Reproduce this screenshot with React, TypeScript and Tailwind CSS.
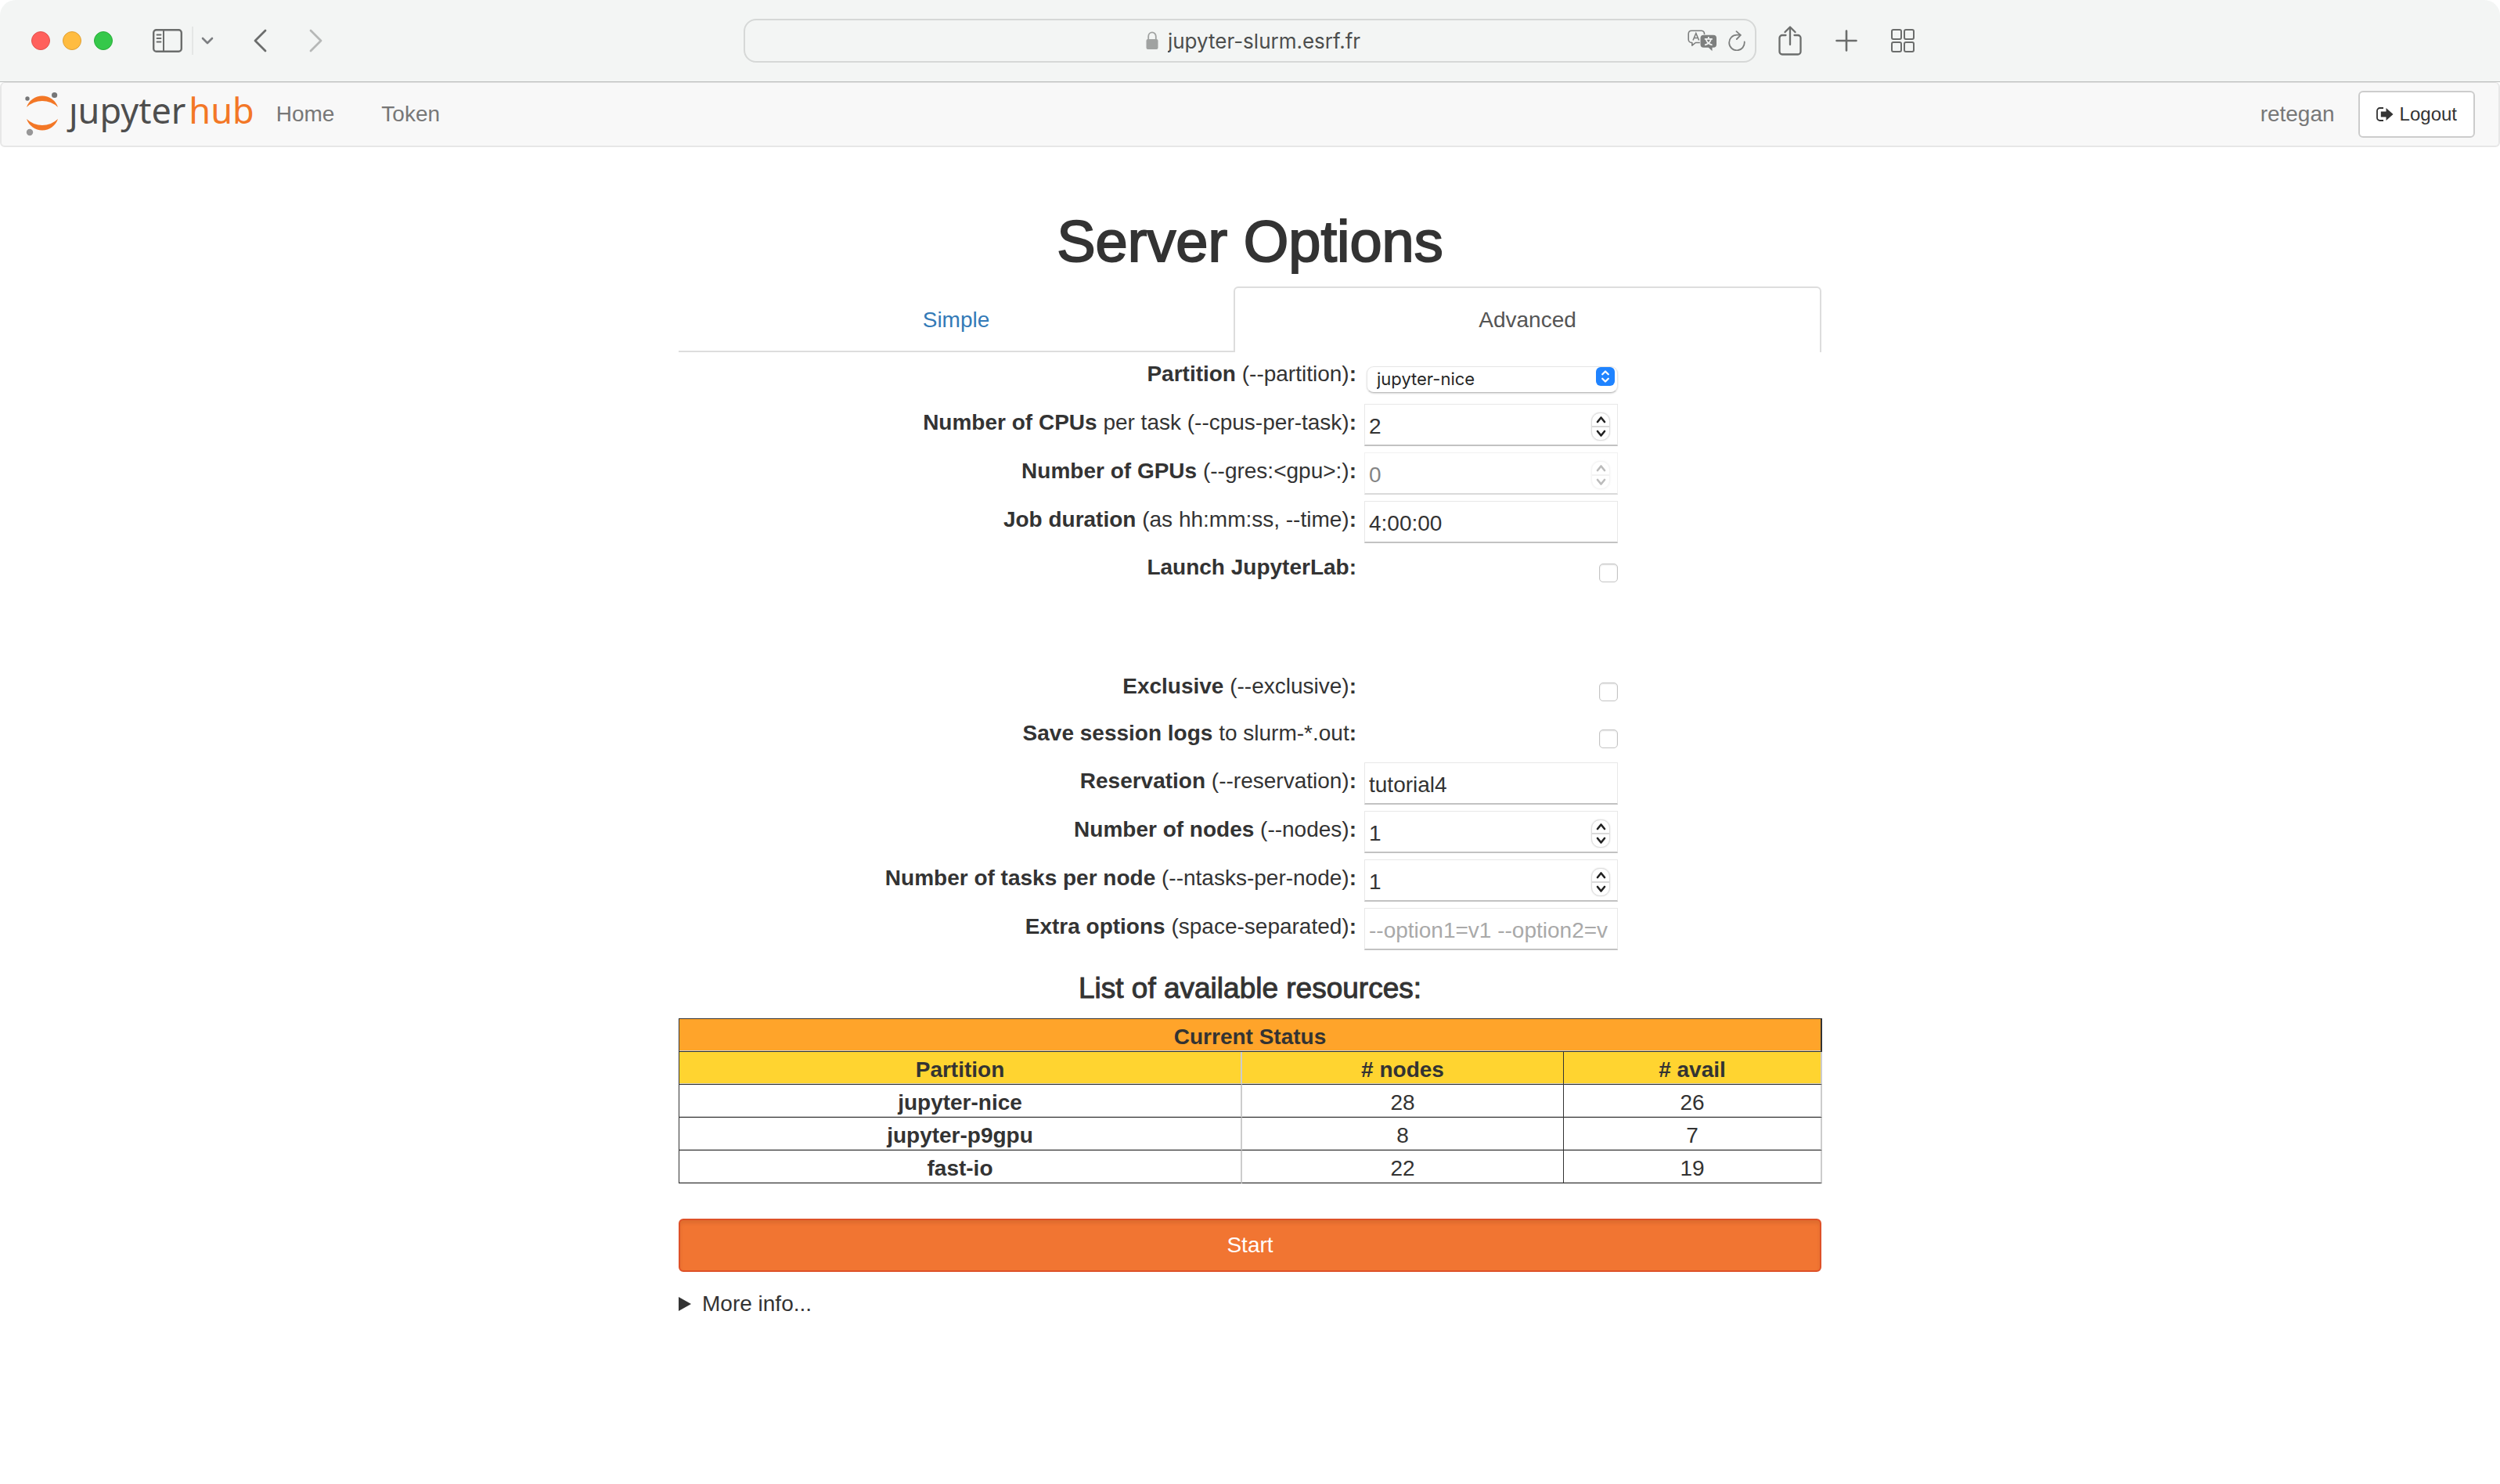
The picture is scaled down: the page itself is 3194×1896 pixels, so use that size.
import React, { useState } from "react";

const BODY = "font-['Liberation_Sans',Arial,sans-serif]";

function LogoMark() {
  return (
    <svg width="44" height="58" viewBox="0 0 44 58" aria-hidden="true">
      <circle cx="3" cy="9" r="2.7" fill="#767677" />
      <circle cx="37.6" cy="4.5" r="3.6" fill="#767677" />
      <circle cx="6" cy="52" r="4.2" fill="#989798" />
      <path d="M2 20A21.1 21.1 0 0 1 42 20A29 29 0 0 0 2 20Z" fill="#f37726" />
      <path d="M2 35A21.1 21.1 0 0 0 42 35A29 29 0 0 1 2 35Z" fill="#f37726" />
    </svg>
  );
}

function SidebarIcon() {
  return (
    <svg width="38" height="30" viewBox="0 0 38 30" fill="none" stroke="#6b6d6c" strokeWidth="2.4">
      <rect x="1.2" y="1.2" width="35.6" height="27.6" rx="3.5" />
      <path d="M14 1v28" strokeWidth="2" />
      <path d="M5.5 7.5h5M5.5 12h5M5.5 16.5h5" strokeWidth="1.8" strokeLinecap="round" />
    </svg>
  );
}

function ChevronIcon({ d, w, h, color, stroke }: { d: string; w: number; h: number; color: string; stroke: number }) {
  return (
    <svg width={w} height={h} viewBox={`0 0 ${w} ${h}`} fill="none" stroke={color} strokeWidth={stroke} strokeLinecap="round" strokeLinejoin="round">
      <path d={d} />
    </svg>
  );
}

function LockIcon() {
  return (
    <svg width="16" height="24" viewBox="0 0 16 24" aria-hidden="true">
      <path d="M3.2 11V6.5a4.8 5.2 0 0 1 9.6 0V11" fill="none" stroke="#a0a2a1" strokeWidth="1.8" />
      <rect x="0.5" y="10" width="15" height="13" rx="2" fill="#a0a2a1" />
    </svg>
  );
}

function TranslateIcon() {
  return (
    <svg width="38" height="28" viewBox="0 0 38 28" fill="none">
      <path d="M21.5 6V5A4 4 0 0 0 18 1.2H5A4 4 0 0 0 1.2 5v7.5A4 4 0 0 0 5 16.5h.8v3.7l4.5-3.7h5.5" stroke="#7d7f7e" strokeWidth="1.6" strokeLinejoin="round" />
      <path d="M7 13.5 10.8 4.5 14.6 13.5M8.3 10.5h5" stroke="#7d7f7e" strokeWidth="1.6" />
      <path d="M20.5 6.8h12.5a4 4 0 0 1 4 4v8a4 4 0 0 1-4 4h-1.5v4.5L26.8 22.8h-6.3a4 4 0 0 1-4-4v-8a4 4 0 0 1 4-4Z" fill="#7d7f7e" />
      <path d="M26.8 9v2.5M21.8 11.8h10M30 12c-.8 3.5-4 6.5-8 7.5M23.6 12c.8 3.5 4 6.5 8 7.5" stroke="#f3f5f4" strokeWidth="1.7" />
    </svg>
  );
}

function ReloadIcon() {
  return (
    <svg width="22" height="26" viewBox="0 0 22 26" fill="none" stroke="#7d7f7e" strokeWidth="1.8" strokeLinecap="round" strokeLinejoin="round">
      <path d="M20.7 14.5A9.8 9.8 0 1 1 11 5.7h4.5" />
      <path d="M10.5 1.2 15.8 5.9 10.8 11" />
    </svg>
  );
}

function ShareIcon() {
  return (
    <svg width="30" height="38" viewBox="0 0 30 38" fill="none" stroke="#6b6d6c" strokeWidth="2.3" strokeLinecap="round" strokeLinejoin="round">
      <path d="M9.5 12H5a3.5 3.5 0 0 0-3.5 3.5v17.5A3.5 3.5 0 0 0 5 36.5h20a3.5 3.5 0 0 0 3.5-3.5V15.5A3.5 3.5 0 0 0 25 12h-4.5" />
      <path d="M15 24V2M8.5 8 15 1.5 21.5 8" />
    </svg>
  );
}

function PlusIcon() {
  return (
    <svg width="28" height="28" viewBox="0 0 28 28" stroke="#6b6d6c" strokeWidth="2.6" strokeLinecap="round">
      <path d="M14 1.5v25M1.5 14h25" />
    </svg>
  );
}

function GridIcon() {
  return (
    <svg width="30" height="30" viewBox="0 0 30 30" fill="none" stroke="#6b6d6c" strokeWidth="2">
      <rect x="1" y="1" width="12" height="12" rx="2" />
      <rect x="17" y="1" width="12" height="12" rx="2" />
      <rect x="1" y="17" width="12" height="12" rx="2" />
      <rect x="17" y="17" width="12" height="12" rx="2" />
    </svg>
  );
}

function LogoutIcon() {
  return (
    <svg width="22" height="18" viewBox="0 0 22 18" aria-hidden="true">
      <path d="M9 1H4.5A3.5 3.5 0 0 0 1 4.5v9A3.5 3.5 0 0 0 4.5 17H9" fill="none" stroke="#333" strokeWidth="1.8" />
      <path d="M5.8 5.5h6.7V1L21.5 9l-9 8v-4.5H5.8Z" fill="#333" />
    </svg>
  );
}

function Toolbar() {
  return (
    <header className="grid h-[105px] grid-cols-[1fr_minmax(0,1294px)_1fr] items-center rounded-t-[20px] border-b border-[#b9bbba] bg-[#f3f5f4]">
      <div className="flex items-center pl-10">
        <div className="flex gap-4">
          <button aria-label="Close" className="size-6 rounded-full border border-[#e2514d] bg-[#ff605c]" />
          <button aria-label="Minimize" className="size-6 rounded-full border border-[#e0a034] bg-[#ffbc40]" />
          <button aria-label="Zoom" className="size-6 rounded-full border border-[#28ad38] bg-[#35c84a]" />
        </div>
        <button aria-label="Sidebar" className="ml-[51px]"><SidebarIcon /></button>
        <span className="ml-3 h-9 w-0.5 bg-[#e4e6e5]" />
        <button aria-label="Tab groups" className="ml-[10px]">
          <ChevronIcon d="M2 2 8 8 14 2" w={16} h={10} color="#7d7f82" stroke={2.6} />
        </button>
        <button aria-label="Back" className="ml-[50px]">
          <ChevronIcon d="M16 2 3 15 16 28" w={18} h={30} color="#6b6d6c" stroke={2.8} />
        </button>
        <button aria-label="Forward" className="ml-[54px]">
          <ChevronIcon d="M2 2 15 15 2 28" w={18} h={30} color="#b6b8b7" stroke={2.8} />
        </button>
      </div>
      <div className="flex h-14 items-center rounded-2xl border-2 border-[#d6d8d7] px-3">
        <div className="flex-1" />
        <div className="flex items-center gap-3 pl-2">
          <LockIcon />
          <input
            aria-label="Address"
            defaultValue="jupyter-slurm.esrf.fr"
            className="bg-transparent pt-0.5 font-['Inter',sans-serif] text-[26px] leading-8 text-[#4c4e4d] outline-none [field-sizing:content]"
          />
        </div>
        <div className="flex flex-1 items-center justify-end gap-[14px]">
          <button aria-label="Translate"><TranslateIcon /></button>
          <button aria-label="Reload"><ReloadIcon /></button>
        </div>
      </div>
      <div className="flex items-center gap-[43px] pl-7">
        <button aria-label="Share"><ShareIcon /></button>
        <button aria-label="New tab"><PlusIcon /></button>
        <button aria-label="Tab overview"><GridIcon /></button>
      </div>
    </header>
  );
}

function Navbar() {
  return (
    <nav className="flex h-[83px] items-center rounded-md border-2 border-t border-[#e7e7e7] bg-[#f8f8f8] px-[30px] text-[28px] leading-10 text-[#777]">
      <a href="#home" aria-label="jupyterhub" className="flex items-center gap-3">
        <LogoMark />
        <span className="pb-3 font-['Noto_Sans',sans-serif] text-[45px] leading-none text-[#4e4e4e]">
          ȷupyter<span className="pl-1 text-[#f37726]">hub</span>
        </span>
      </a>
      <a href="#home" className="ml-7">Home</a>
      <a href="#token" className="ml-[60px]">Token</a>
      <span className="mr-[30px] ml-auto">retegan</span>
      <button className="flex h-[60px] items-center gap-2 rounded-md border-2 border-[#ccc] bg-white px-[21px] text-[24px] text-[#333]">
        <LogoutIcon />
        Logout
      </button>
    </nav>
  );
}

function Row({ id, name, note, check = false, children }: { id: string; name: string; note?: string; check?: boolean; children: React.ReactNode }) {
  return (
    <div className={check ? "flex h-[60px]" : "flex h-[62px]"}>
      <label htmlFor={id} className={check ? "w-[866px] shrink-0 pt-[3px] text-right font-bold" : "w-[866px] shrink-0 pt-1 text-right font-bold"}>
        {name}
        {note && <span className="font-normal"> {note}</span>}:
      </label>
      <div className={check ? "ml-[10px] flex w-[324px] justify-end pt-[18px]" : "ml-[10px] w-[324px]"}>{children}</div>
    </div>
  );
}

const FIELD =
  "h-[54px] w-full border border-[#e8e8e8] border-b-2 border-b-[#c2c2c2] bg-white pt-1 pl-[5px] text-[28px] text-[#333] outline-none placeholder:text-[#a9a9a9]";

function TextField({ id, value, placeholder }: { id: string; value?: string; placeholder?: string }) {
  return <input id={id} type="text" defaultValue={value} placeholder={placeholder} className={`${FIELD} pr-3`} />;
}

function NumberField({ id, value, disabled = false }: { id: string; value: number; disabled?: boolean }) {
  const [n, setN] = useState(value);
  return (
    <div className={disabled ? "relative opacity-60" : "relative"}>
      <input
        id={id}
        type="number"
        value={n}
        disabled={disabled}
        onChange={(e) => setN(Number(e.target.value))}
        className={`${FIELD} [appearance:textfield] [&::-webkit-inner-spin-button]:appearance-none`}
      />
      <div className={`absolute top-[11px] right-[10px] flex h-9 w-6 flex-col divide-y-2 divide-[#d9d9d9] rounded-[11px] border border-[#dedede] bg-white shadow-[0_0_2px_rgba(0,0,0,0.15)] ${disabled ? "opacity-50" : ""}`}>
        <button aria-label="Increase" disabled={disabled} onClick={() => setN(n + 1)} className="flex flex-1 items-center justify-center">
          <ChevronIcon d="M2 8 6.5 2.5 11 8" w={13} h={10} color="#222" stroke={2.6} />
        </button>
        <button aria-label="Decrease" disabled={disabled} onClick={() => setN(n - 1)} className="flex flex-1 items-center justify-center">
          <ChevronIcon d="M2 2 6.5 7.5 11 2" w={13} h={10} color="#222" stroke={2.6} />
        </button>
      </div>
    </div>
  );
}

function CheckField({ id }: { id: string }) {
  return (
    <input
      id={id}
      type="checkbox"
      className="size-6 appearance-none rounded-[5px] border border-[#c4c4c4] bg-white shadow-[inset_0_1px_2px_rgba(0,0,0,0.12)] checked:bg-[#1a7dff]"
    />
  );
}

function SelectField({ id }: { id: string }) {
  return (
    <div className="relative pt-[9px] pl-[3px]">
      <select
        id={id}
        className="h-[34px] w-full appearance-none rounded-[9px] border border-[#e6e6e6] border-b-[#bdbdbd] bg-white pb-0.5 pl-3 font-['Inter',sans-serif] text-[22px] leading-7 text-[#262626] shadow-[0_1px_2px_rgba(0,0,0,0.15)]"
      >
        <option>jupyter-nice</option>
        <option>jupyter-p9gpu</option>
        <option>fast-io</option>
      </select>
      <svg className="pointer-events-none absolute top-[15px] right-1" width="24" height="24" viewBox="0 0 24 24" fill="none">
        <rect width="24" height="24" rx="6" fill="#1f83ff" />
        <path d="M8.2 9.3 12 5.5l3.8 3.8M8.2 14.7 12 18.5l3.8-3.8" stroke="#fff" strokeWidth="2.2" strokeLinecap="round" strokeLinejoin="round" />
      </svg>
    </div>
  );
}

const resources = [
  ["jupyter-nice", 28, 26],
  ["jupyter-p9gpu", 8, 7],
  ["fast-io", 22, 19],
];

const CELL = "border-b border-[#333] pt-1 text-center leading-[37px] shadow-[inset_0_-1px_0_#ccc]";

function ResourceTable() {
  return (
    <table className="w-full table-fixed border-separate border-spacing-0 border-l border-[#333]">
      <colgroup>
        <col className="w-[719px]" />
        <col className="w-[411px]" />
        <col className="w-[330px]" />
      </colgroup>
      <thead>
        <tr>
          <th colSpan={3} className={`${CELL} border-t border-r-2 bg-[#ffa42a]`}>Current Status</th>
        </tr>
        <tr className="bg-[#ffd430]">
          <th className={`${CELL} border-r-2 border-r-[#ccc]`}>Partition</th>
          <th className={`${CELL} border-r`}># nodes</th>
          <th className={`${CELL} border-r-2 border-r-[#ccc]`}># avail</th>
        </tr>
      </thead>
      <tbody>
        {resources.map(([name, nodes, avail]) => (
          <tr key={name}>
            <th scope="row" className={`${CELL} border-r-2 border-r-[#ccc]`}>{name}</th>
            <td className={`${CELL} border-r`}>{nodes}</td>
            <td className={`${CELL} border-r-2 border-r-[#ccc]`}>{avail}</td>
          </tr>
        ))}
      </tbody>
    </table>
  );
}

export default function App() {
  return (
    <div className={`min-h-screen bg-white text-[28px] leading-10 text-[#333] ${BODY}`}>
      <Toolbar />
      <Navbar />
      <main className="mx-auto max-w-[1460px] pt-[81px]">
        <h1 className="text-center text-[74px] leading-[80px] [-webkit-text-stroke:2px_#333]">Server Options</h1>
        <div role="tablist" className="mt-[17px] flex">
          <button role="tab" aria-selected="false" className="flex-[711] border-b-2 border-[#ddd] pt-[23px] pb-[19px] text-[#337ab7]">
            Simple
          </button>
          <button role="tab" aria-selected="true" className="flex-[749] rounded-t-md border-2 border-b-0 border-[#ddd] pt-[21px] pb-[21px] text-[#555]">
            Advanced
          </button>
        </div>
        <form className="pt-1" onSubmit={(e) => e.preventDefault()}>
          <Row id="partition" name="Partition" note="(--partition)"><SelectField id="partition" /></Row>
          <Row id="cpus" name="Number of CPUs" note="per task (--cpus-per-task)"><NumberField id="cpus" value={2} /></Row>
          <Row id="gpus" name="Number of GPUs" note="(--gres:<gpu>:)"><NumberField id="gpus" value={0} disabled /></Row>
          <Row id="time" name="Job duration" note="(as hh:mm:ss, --time)"><TextField id="time" value="4:00:00" /></Row>
          <Row id="lab" name="Launch JupyterLab" check><CheckField id="lab" /></Row>
          <div className="pt-[92px]">
            <Row id="exclusive" name="Exclusive" note="(--exclusive)" check><CheckField id="exclusive" /></Row>
            <Row id="logs" name="Save session logs" note="to slurm-*.out" check><CheckField id="logs" /></Row>
            <Row id="reservation" name="Reservation" note="(--reservation)"><TextField id="reservation" value="tutorial4" /></Row>
            <Row id="nodes" name="Number of nodes" note="(--nodes)"><NumberField id="nodes" value={1} /></Row>
            <Row id="ntasks" name="Number of tasks per node" note="(--ntasks-per-node)"><NumberField id="ntasks" value={1} /></Row>
            <Row id="extra" name="Extra options" note="(space-separated)"><TextField id="extra" placeholder="--option1=v1 --option2=v2" /></Row>
          </div>
          <h2 className="mt-[21px] mb-[18px] text-center text-[37px] leading-10 [-webkit-text-stroke:1px_#333]">List of available resources:</h2>
          <ResourceTable />
          <button
            type="submit"
            className="mt-[45px] h-[68px] w-full rounded-md border-2 border-[#de5128] bg-[#f17532] text-white shadow-[inset_0_4px_5px_rgba(0,0,0,0.08)]"
          >
            Start
          </button>
        </form>
        <details className="mt-[21px]">
          <summary className="flex cursor-pointer list-none items-center gap-[14px]">
            <svg width="16" height="18" viewBox="0 0 16 18" aria-hidden="true">
              <path d="M0 0 16 9 0 18Z" fill="#333" />
            </svg>
            More info...
          </summary>
          <p>Options are passed to Slurm when the server starts.</p>
        </details>
      </main>
    </div>
  );
}
